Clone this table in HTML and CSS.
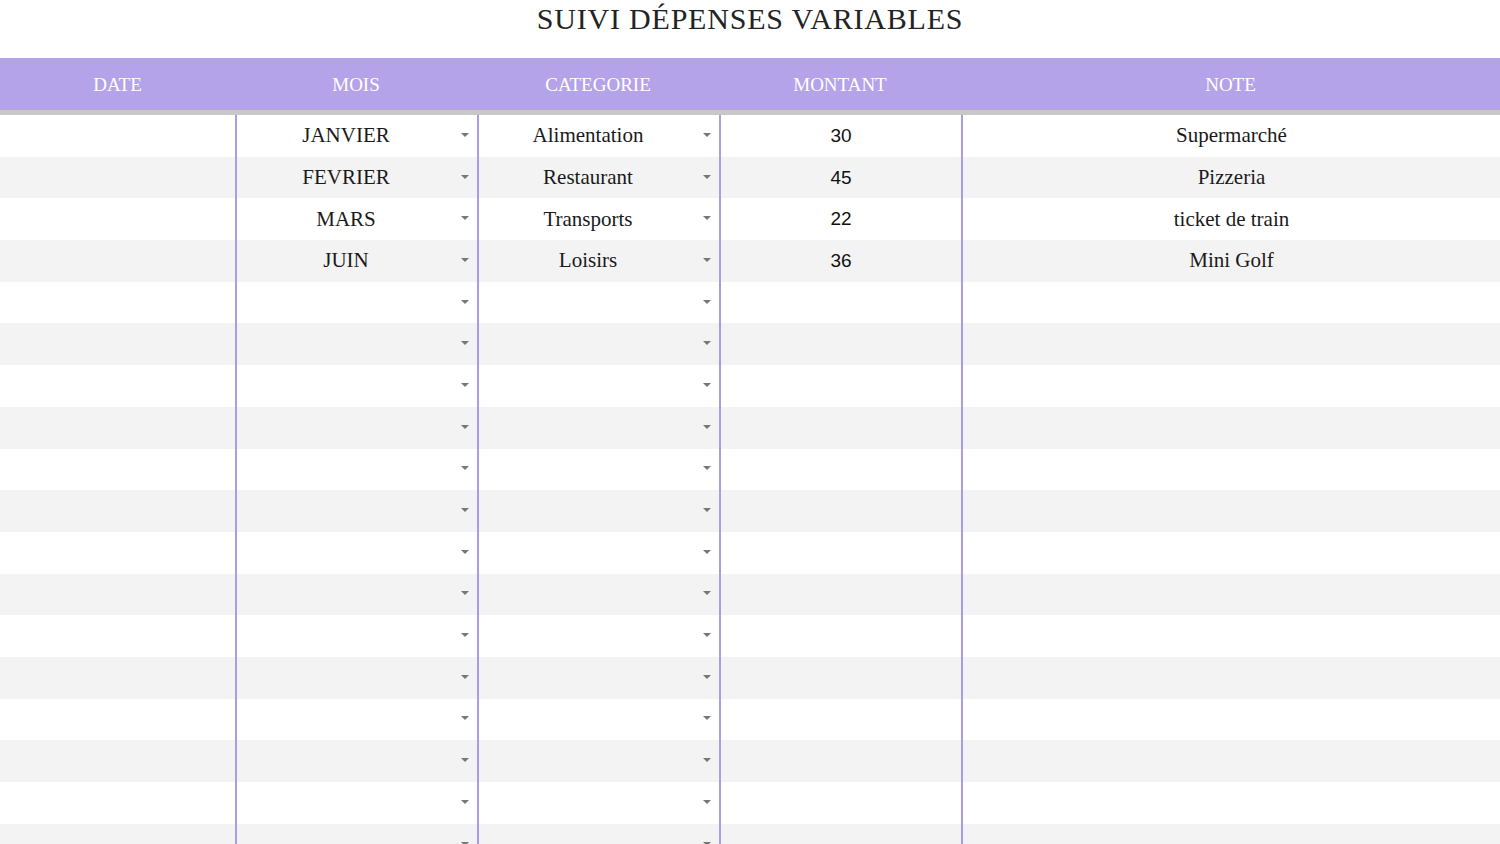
FILE: index.html
```html
<!DOCTYPE html>
<html lang="fr">
<head>
<meta charset="utf-8">
<title>Suivi dépenses variables</title>
<link rel="stylesheet" href="styles.css">
</head>
<body>
<h1 class="title">SUIVI DÉPENSES VARIABLES</h1>
<div class="sheet">
  <div class="head">
    <div class="hcell">DATE</div>
    <div class="hcell">MOIS</div>
    <div class="hcell">CATEGORIE</div>
    <div class="hcell">MONTANT</div>
    <div class="hcell">NOTE</div>
  </div>
  <div class="rule"></div>
  <div class="body">
    <div class="row"><div class="cell"></div><div class="cell sel"><span>JANVIER</span><i class="arrow"></i></div><div class="cell sel"><span>Alimentation</span><i class="arrow"></i></div><div class="cell num">30</div><div class="cell">Supermarché</div></div>
    <div class="row"><div class="cell"></div><div class="cell sel"><span>FEVRIER</span><i class="arrow"></i></div><div class="cell sel"><span>Restaurant</span><i class="arrow"></i></div><div class="cell num">45</div><div class="cell">Pizzeria</div></div>
    <div class="row"><div class="cell"></div><div class="cell sel"><span>MARS</span><i class="arrow"></i></div><div class="cell sel"><span>Transports</span><i class="arrow"></i></div><div class="cell num">22</div><div class="cell">ticket de train</div></div>
    <div class="row"><div class="cell"></div><div class="cell sel"><span>JUIN</span><i class="arrow"></i></div><div class="cell sel"><span>Loisirs</span><i class="arrow"></i></div><div class="cell num">36</div><div class="cell">Mini Golf</div></div>
    <div class="row"><div class="cell"></div><div class="cell sel"><span></span><i class="arrow"></i></div><div class="cell sel"><span></span><i class="arrow"></i></div><div class="cell num"></div><div class="cell"></div></div>
    <div class="row"><div class="cell"></div><div class="cell sel"><span></span><i class="arrow"></i></div><div class="cell sel"><span></span><i class="arrow"></i></div><div class="cell num"></div><div class="cell"></div></div>
    <div class="row"><div class="cell"></div><div class="cell sel"><span></span><i class="arrow"></i></div><div class="cell sel"><span></span><i class="arrow"></i></div><div class="cell num"></div><div class="cell"></div></div>
    <div class="row"><div class="cell"></div><div class="cell sel"><span></span><i class="arrow"></i></div><div class="cell sel"><span></span><i class="arrow"></i></div><div class="cell num"></div><div class="cell"></div></div>
    <div class="row"><div class="cell"></div><div class="cell sel"><span></span><i class="arrow"></i></div><div class="cell sel"><span></span><i class="arrow"></i></div><div class="cell num"></div><div class="cell"></div></div>
    <div class="row"><div class="cell"></div><div class="cell sel"><span></span><i class="arrow"></i></div><div class="cell sel"><span></span><i class="arrow"></i></div><div class="cell num"></div><div class="cell"></div></div>
    <div class="row"><div class="cell"></div><div class="cell sel"><span></span><i class="arrow"></i></div><div class="cell sel"><span></span><i class="arrow"></i></div><div class="cell num"></div><div class="cell"></div></div>
    <div class="row"><div class="cell"></div><div class="cell sel"><span></span><i class="arrow"></i></div><div class="cell sel"><span></span><i class="arrow"></i></div><div class="cell num"></div><div class="cell"></div></div>
    <div class="row"><div class="cell"></div><div class="cell sel"><span></span><i class="arrow"></i></div><div class="cell sel"><span></span><i class="arrow"></i></div><div class="cell num"></div><div class="cell"></div></div>
    <div class="row"><div class="cell"></div><div class="cell sel"><span></span><i class="arrow"></i></div><div class="cell sel"><span></span><i class="arrow"></i></div><div class="cell num"></div><div class="cell"></div></div>
    <div class="row"><div class="cell"></div><div class="cell sel"><span></span><i class="arrow"></i></div><div class="cell sel"><span></span><i class="arrow"></i></div><div class="cell num"></div><div class="cell"></div></div>
    <div class="row"><div class="cell"></div><div class="cell sel"><span></span><i class="arrow"></i></div><div class="cell sel"><span></span><i class="arrow"></i></div><div class="cell num"></div><div class="cell"></div></div>
    <div class="row"><div class="cell"></div><div class="cell sel"><span></span><i class="arrow"></i></div><div class="cell sel"><span></span><i class="arrow"></i></div><div class="cell num"></div><div class="cell"></div></div>
    <div class="row"><div class="cell"></div><div class="cell sel"><span></span><i class="arrow"></i></div><div class="cell sel"><span></span><i class="arrow"></i></div><div class="cell num"></div><div class="cell"></div></div>
  </div>
</div>
</body>
</html>
```
FILE: styles.css
```css
html, body {
  margin: 0;
  padding: 0;
  background: #ffffff;
  overflow: hidden;
}
body {
  font-family: "Liberation Serif", "DejaVu Serif", serif;
  color: #1a1a1a;
}
.title {
  margin: 0;
  height: 58px;
  box-sizing: border-box;
  padding-top: 1px;
  text-align: center;
  font-weight: normal;
  font-size: 30px;
  line-height: 36px;
  letter-spacing: 0.8px;
  color: #232323;
}
.head {
  display: grid;
  grid-template-columns: 235px 242px 242px 242px 1fr;
  height: 52px;
  background: #b4a3e8;
}
.hcell {
  display: flex;
  align-items: center;
  justify-content: center;
  color: #ffffff;
  font-size: 19px;
  padding-top: 1px;
}
.rule {
  height: 5px;
  background: #c8c8c8;
}
.row {
  display: grid;
  grid-template-columns: 235px 242px 242px 242px 1fr;
  height: 41.7px;
}
.row:nth-child(even) {
  background: #f3f3f3;
}
.cell {
  display: flex;
  align-items: center;
  justify-content: center;
  font-size: 21px;
  box-sizing: border-box;
}
.cell + .cell {
  border-left: 2px solid #ad9aea;
}
.sel {
  position: relative;
  padding-right: 22px;
}
.arrow {
  position: absolute;
  right: 8px;
  top: 50%;
  margin-top: -3px;
  width: 0;
  height: 0;
  border-left: 4px solid transparent;
  border-right: 4px solid transparent;
  border-top: 4px solid #777777;
}
.num {
  font-family: "Liberation Sans", Arial, sans-serif;
  font-size: 19px;
  color: #111111;
}
```
